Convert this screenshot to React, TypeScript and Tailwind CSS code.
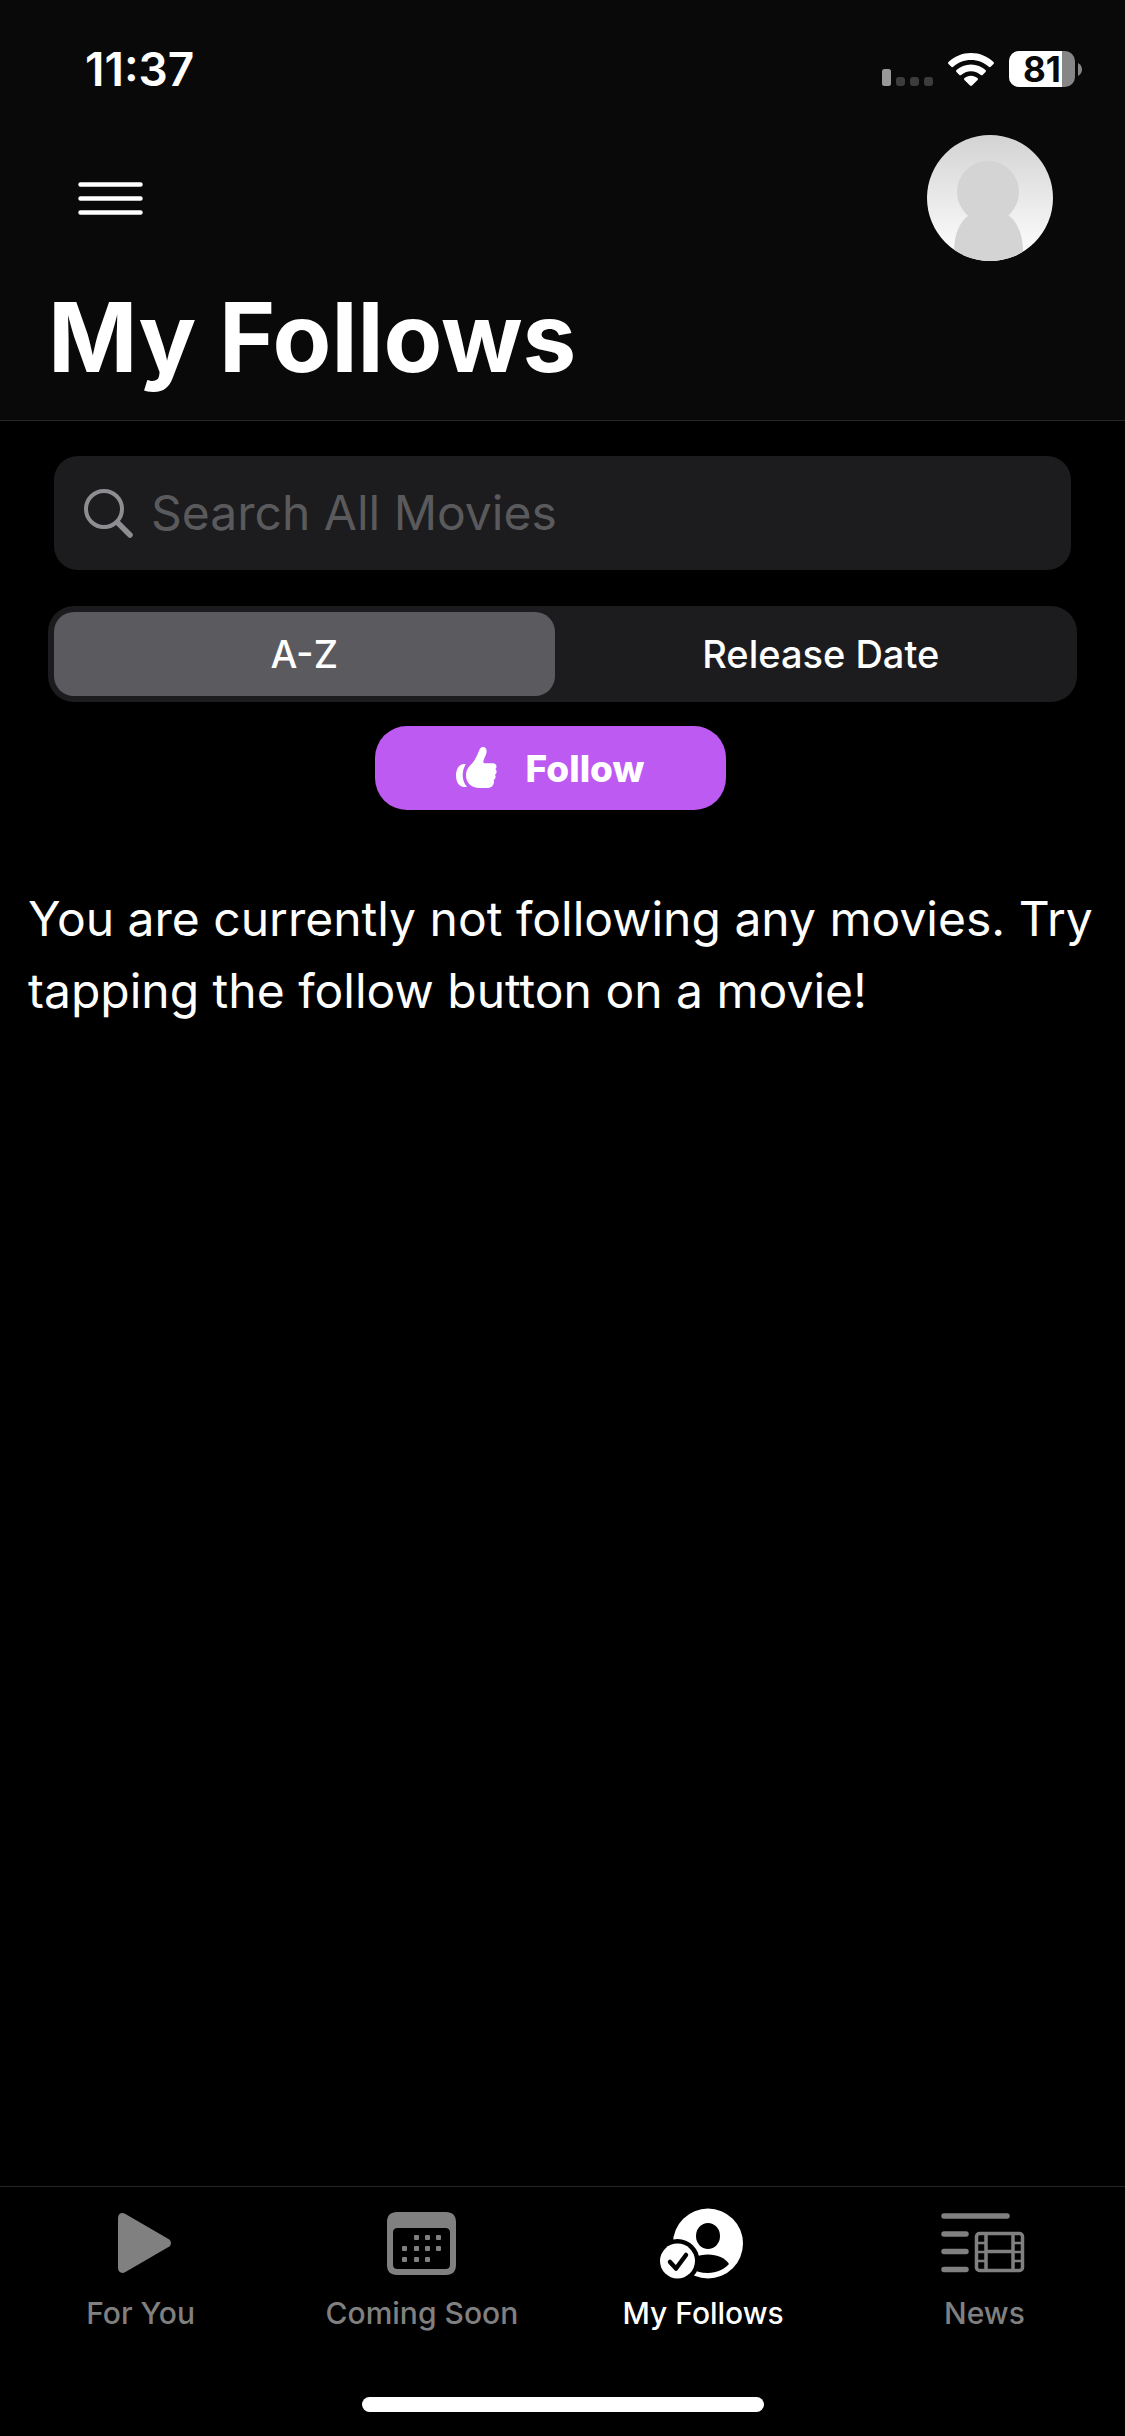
import { useState } from 'react'
import type { ReactNode } from 'react'

type TabId = 'foryou' | 'soon' | 'follows' | 'news'
type Sort = 'az' | 'date'

const SORTS: { id: Sort; label: string }[] = [
  { id: 'az', label: 'A-Z' },
  { id: 'date', label: 'Release Date' },
]

function SignalIcon() {
  return (
    <svg width="51" height="17" viewBox="0 0 51 17" aria-hidden="true">
      <rect width="9" height="17" rx="2.5" fill="#999" />
      <rect x="14" y="8" width="9" height="9" rx="3" fill="#3c3c3c" />
      <rect x="28" y="8" width="9" height="9" rx="3" fill="#3c3c3c" />
      <rect x="42" y="8" width="9" height="9" rx="3" fill="#3c3c3c" />
    </svg>
  )
}

function WifiIcon() {
  return (
    <svg width="46" height="33" viewBox="0 0 46 33" aria-hidden="true" fill="#fff">
      <path d="M23 0C14.300 0 6.400 3.400 .5 9c-.6.600-.6 1.400 0 2l2.800 2.800c.5.500 1.300.5 1.900 0C9.900 9.500 16.100 7 23 7s13.100 2.500 17.800 6.800c.6.500 1.400.5 1.900 0l2.800-2.800c.6-.6.6-1.400 0-2C39.600 3.400 31.700 0 23 0z" />
      <path d="M23 11.400c-5.600 0-10.700 2.100-14.500 5.600-.6.600-.6 1.400 0 2l2.900 2.900c.5.500 1.300.5 1.800 0 2.600-2.300 6-3.700 9.800-3.700s7.200 1.400 9.800 3.700c.5.500 1.300.5 1.800 0l2.900-2.900c.6-.6.6-1.400 0-2-3.800-3.500-8.900-5.600-14.500-5.600z" />
      <path d="M23 22.700c-2.500 0-4.800.9-6.500 2.400-.6.500-.6 1.300-.1 1.800l5.600 5.600c.6.600 1.400.6 2 0l5.600-5.600c.5-.5.500-1.300-.1-1.800-1.700-1.500-4-2.400-6.500-2.400z" />
    </svg>
  )
}

function Battery({ level }: { level: number }) {
  return (
    <div className="flex items-center gap-[3px]">
      <div className="relative flex h-9 w-[66px] items-center justify-center rounded-[10px] bg-[#868686]">
        <div className="absolute inset-y-0 left-0 rounded-l-[10px] bg-white" style={{ width: `${level}%` }} />
        <span className="relative text-[35px] leading-none font-bold text-[#090909]">{level}</span>
      </div>
      <svg width="4" height="13" viewBox="0 0 4 13" aria-hidden="true">
        <path d="M0 0c2.600 1.200 4 3.700 4 6.500S2.600 11.800 0 13z" fill="#868686" />
      </svg>
    </div>
  )
}

function Avatar() {
  return (
    <svg width="126" height="126" viewBox="0 0 126 126" aria-hidden="true">
      <defs>
        <linearGradient id="avatarBg" x1="0" y1="0" x2="0" y2="1">
          <stop offset="0" stopColor="#d3d3d3" />
          <stop offset="1" stopColor="#ffffff" />
        </linearGradient>
        <clipPath id="avatarClip"><circle cx="63" cy="63" r="63" /></clipPath>
      </defs>
      <g clipPath="url(#avatarClip)">
        <rect width="126" height="126" fill="url(#avatarBg)" />
        <circle cx="61" cy="57" r="31" fill="#d4d4d4" />
        <path d="M42 80C32 87 27 101 27 116v10h69v-10c0-15-5-29-15-36z" fill="#d4d4d4" />
      </g>
    </svg>
  )
}

function SearchIcon() {
  return (
    <svg width="49" height="49" viewBox="0 0 49 49" aria-hidden="true" fill="none" stroke="#8e8e92" strokeLinecap="round">
      <circle cx="20" cy="20" r="18" strokeWidth="4" />
      <path d="M33.500 33.500L46 46" strokeWidth="5.500" />
    </svg>
  )
}

function ThumbIcon() {
  return (
    <svg width="41" height="42" viewBox="0 0 41 42" aria-hidden="true" fill="#fff">
      <path d="M27 0c2.500 0 4 2 3.600 5-.4 3.600-3.300 7-3.300 10 0 .8.600 1.200 1.400 1.200h8.100c2.300 0 3.700 1.300 3.700 3.200 0 1.200-.5 2-1.200 2.600.9.600 1.300 1.600 1.300 2.700 0 1.400-.7 2.500-1.700 3 .5.600.7 1.300.7 2.100 0 1.500-.8 2.600-2 3.100.3.500.4 1 .4 1.700 0 2.900-1.800 6.400-6 6.400h-8.500C15.500 41 10 36 10 28.500c0-5.500 2.500-8.500 5.500-11.500 3.200-3.200 5-7.300 7.200-12.500C23.800 1.700 24.800 0 27 0z" />
      <path d="M9.800 17.200c-2 3-3.100 6.700-3.100 11 0 4.500 1.500 8.300 4.300 11.500-.9.200-1.900.3-2.900.3C3.200 40 0 35 0 28.500S3.300 17 7.800 17c.7 0 1.400 0 2 .2z" />
    </svg>
  )
}

function PlayIcon() {
  return (
    <svg width="60" height="60" viewBox="-7 0 60 60" aria-hidden="true" fill="currentColor">
      <path d="M0 5C0 1 3.500-1.200 7 .8L50.500 26c3.300 2 3.300 6 0 8L7 59.200C3.500 61.200 0 59 0 55z" />
    </svg>
  )
}

const DAYS = [[27, 23], [38, 23], [49, 23], [15, 34], [27, 34], [38, 34], [49, 34], [15, 45], [27, 45], [38, 45]]

function CalendarIcon() {
  return (
    <svg width="69" height="63" viewBox="0 0 69 63" aria-hidden="true" fill="currentColor">
      <path fillRule="evenodd" d="M10 0h49c6.500 0 10 3.500 10 10v43c0 6.500-3.500 10-10 10H10C3.500 63 0 59.500 0 53V10C0 3.500 3.500 0 10 0zm.5 16C7.500 16 6 17.500 6 20.500v32c0 3 1.500 4.500 4.500 4.500h48c3 0 4.500-1.500 4.500-4.500v-32c0-3-1.500-4.500-4.500-4.500z" />
      {DAYS.map(([x, y]) => <rect key={`${x}-${y}`} x={x} y={y} width="5" height="5" rx="1" />)}
    </svg>
  )
}

function FollowsIcon() {
  return (
    <svg width="87" height="71" viewBox="0 0 87 71" aria-hidden="true">
      <circle cx="48" cy="35.500" r="35" fill="currentColor" />
      <ellipse cx="48" cy="28" rx="12" ry="13" fill="#000" />
      <path d="M26 57c4-6.500 12-10.500 22-10.500 9.500 0 17 3.500 21 9.500-5 5.500-12.500 9-21 9-7 0-13-2-18-5z" fill="#000" />
      <circle cx="17.500" cy="53" r="22" fill="#000" />
      <circle cx="17.500" cy="53" r="17.500" fill="currentColor" />
      <path d="M10 54l6 6.500L26 47" fill="none" stroke="#000" strokeWidth="4.500" strokeLinecap="round" strokeLinejoin="round" />
    </svg>
  )
}

function NewsIcon() {
  return (
    <svg width="87" height="61" viewBox="0 0 87 61" aria-hidden="true" fill="none" stroke="currentColor">
      <path d="M3 3h63M3 21h22M3 38.500h22M3 56.500h22" strokeWidth="5.500" strokeLinecap="round" />
      <rect x="35.500" y="20.500" width="46" height="37" rx="3" strokeWidth="3.500" />
      <path d="M45 20v38M72 20v38M45 38.500h27" strokeWidth="3.500" />
      <path d="M36 30h9M36 39h9M36 48h9M72 30h9M72 39h9M72 48h9" strokeWidth="2.500" />
    </svg>
  )
}

const TABS: { id: TabId; label: string; icon: ReactNode }[] = [
  { id: 'foryou', label: 'For You', icon: <PlayIcon /> },
  { id: 'soon', label: 'Coming Soon', icon: <CalendarIcon /> },
  { id: 'follows', label: 'My Follows', icon: <FollowsIcon /> },
  { id: 'news', label: 'News', icon: <NewsIcon /> },
]

export default function App() {
  const [tab, setTab] = useState<TabId>('follows')
  const [sort, setSort] = useState<Sort>('az')
  const [query, setQuery] = useState('')

  return (
    <div className="flex min-h-screen flex-col bg-black font-['Inter',sans-serif] text-white">
      <header className="border-b border-[#262626] bg-[#090909]">
        {/* status bar */}
        <div className="flex h-[135px] items-center justify-between pt-[3px] pr-[43px] pl-[85px]">
          <span className="text-[46px] leading-none font-semibold">11:37</span>
          <div className="flex items-center gap-[15px]">
            <div className="flex items-end gap-[15px]">
              <SignalIcon />
              <WifiIcon />
            </div>
            <Battery level={81} />
          </div>
        </div>

        <div className="flex items-center justify-between px-[72px]">
          <button type="button" aria-label="Menu" className="px-1.5 py-6">
            <svg width="65" height="33" viewBox="0 0 65 33" aria-hidden="true" stroke="#fff" strokeWidth="4.500" strokeLinecap="round">
              <path d="M2.500 2.500h60M2.500 16.500h60M2.500 30.500h60" />
            </svg>
          </button>
          <button type="button" aria-label="Profile" className="rounded-full">
            <Avatar />
          </button>
        </div>

        <h1 className="px-12 pt-4 pb-[23px] text-[96px] leading-[120px] font-bold">My Follows</h1>
      </header>

      <main className="flex flex-1 flex-col px-12 pt-[35px]">
        <label className="mx-1.5 flex h-[114px] items-center gap-[18px] rounded-[24px] bg-[#1c1c1e] px-[30px]">
          <SearchIcon />
          <input
            type="search"
            aria-label="Search All Movies"
            placeholder="Search All Movies"
            value={query}
            onChange={(e) => setQuery(e.target.value)}
            className="min-w-0 flex-1 bg-transparent text-[48px] leading-[60px] outline-none placeholder:text-[#5a5a5c]"
          />
        </label>

        <div className="mt-9 grid h-24 grid-cols-2 gap-4 rounded-[26px] bg-[#1c1c1e] p-1.5">
          {SORTS.map((s) => (
            <button
              key={s.id}
              type="button"
              aria-pressed={sort === s.id}
              onClick={() => setSort(s.id)}
              className={`rounded-[20px] text-[38px] leading-none font-medium ${sort === s.id ? 'bg-[#5b5a5f]' : ''}`}
            >
              {s.label}
            </button>
          ))}
        </div>

        <button type="button" className="mt-6 mr-6 flex h-[84px] w-[351px] items-center justify-center gap-7 self-center rounded-[32px] bg-[#bc5af2] text-[37px] leading-none font-extrabold">
          <ThumbIcon />
          Follow
        </button>

        <p className="-mx-5 mt-[73px] text-[48px] leading-[72px]">
          You are currently not following any movies. Try tapping the follow button on a movie!
        </p>
      </main>

      <nav className="grid grid-cols-4 border-t border-[#262626] pt-5">
        {TABS.map((t) => (
          <button
            key={t.id}
            type="button"
            aria-current={tab === t.id ? 'page' : undefined}
            onClick={() => setTab(t.id)}
            className={`flex flex-col items-center gap-4 text-[30px] leading-9 font-medium ${tab === t.id ? 'text-white' : 'text-[#808080]'}`}
          >
            <span className="flex h-[72px] items-center">{t.icon}</span>
            {t.label}
          </button>
        ))}
      </nav>
      <div className="flex justify-center pt-[66px] pb-6">
        <div className="h-[15px] w-[402px] rounded-full bg-white" />
      </div>
    </div>
  )
}
